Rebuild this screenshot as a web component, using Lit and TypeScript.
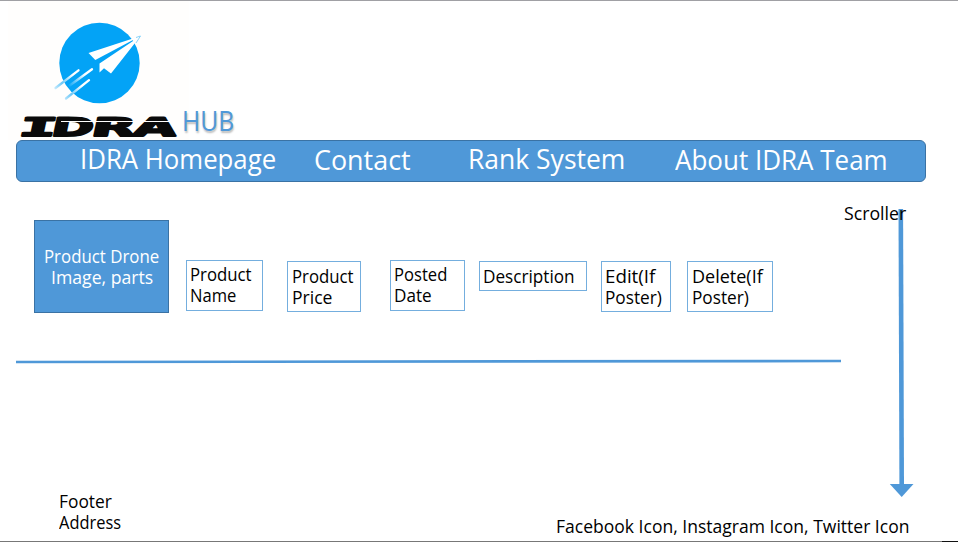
import { LitElement, html, css, svg } from "lit";
import { customElement, property } from "lit/decorators.js";
import { styleMap } from "lit/directives/style-map.js";

/** One line of text, condensed or widened to fill the given width. */
@customElement("fit-line")
class FitLine extends LitElement {
  @property({ type: Number }) width = 100;
  @property() text = "";
  static styles = css`
    :host { display: block; white-space: pre; }
    .box { display: block; }
    .ink { display: inline-block; transform-origin: 0 50%; vertical-align: top; }
  `;
  render() {
    return html`<span class="box" style=${styleMap({ width: this.width + "px" })}><span class="ink">${this.text}</span></span>`;
  }
  updated() {
    const ink = this.renderRoot.querySelector(".ink") as HTMLElement;
    ink.style.transform = `scaleX(${this.width / ink.offsetWidth})`;
  }
}

type Line = [string, number];
const line = ([text, width]: Line) => html`<fit-line .text=${text} .width=${width}></fit-line>`;

const fields: { name: string; lines: Line[] }[] = [
  { name: "name", lines: [["Product", 61.5], ["Name", 46]] },
  { name: "price", lines: [["Product", 61.5], ["Price", 40]] },
  { name: "posted", lines: [["Posted", 53.5], ["Date", 38]] },
  { name: "description", lines: [["Description", 91.5]] },
  { name: "edit", lines: [["Edit(If", 50], ["Poster)", 56.5]] },
  { name: "delete", lines: [["Delete(If", 71], ["Poster)", 56.5]] },
];

@customElement("app-root")
class AppRoot extends LitElement {
  static styles = css`
    :host {
      display: block; width: 958px; height: 542px; box-sizing: border-box; position: relative; overflow: hidden;
      background: #fff; color: #000; border-top: 1px solid #a0a0a4;
      font: 18px/21px "Open Sans", "Noto Sans", sans-serif;
    }
    .page { display: flex; flex-direction: column; height: 541px; }
    header { display: flex; height: 139px; flex: none; }
    .brand { width: 181px; margin-left: 8px; background: #fffefd; display: flex; flex-direction: column; }
    .mark { display: block; margin: 17px 0 0 42px; flex: none; }
    .word { display: block; margin: 0 0 0 10px; flex: none; overflow: visible; }
    .word text { font-family: "DejaVu Sans", sans-serif; font-weight: 700; font-size: 25.5px; stroke: #0a0a0a; stroke-width: 1.9; stroke-linejoin: round; fill: #0a0a0a; }
    .word .slab { font-family: "DejaVu Sans Mono", monospace; }
    .hub { margin: 103px 0 0 -7px; font-size: 28px; line-height: 32px; color: #4f98d8; text-shadow: 1px 2px 2px rgba(0,0,0,.28); }
    nav {
      flex: none; display: flex; width: 910px; height: 42px; margin-left: 16px; box-sizing: border-box;
      border: 1px solid #3a72a4; border-radius: 6px; background: #4f98d8; color: #fff; font-size: 28px; line-height: 32px;
    }
    .home { margin: 1px 0 0 63px; }
    .contact { margin: 2px 0 0 37.5px; }
    .rank { margin: 1px 0 0 57px; }
    .about { margin: 2px 0 0 50px; }
    .body { display: flex; flex: 1; }
    .content { width: 841px; flex: none; }
    .row { display: flex; align-items: flex-start; height: 140px; padding: 38px 0 0 34px; box-sizing: border-box; }
    .photo {
      width: 135px; height: 93px; box-sizing: border-box; border: 1px solid #3a72a4; background: #4f98d8; color: #fff;
      display: flex; flex-direction: column; align-items: center; padding-top: 25px; margin-right: 17px;
    }
    .field { box-sizing: border-box; border: 1px solid #74aede; height: 51px; margin-top: 41px; padding: 3px 0 0 3px; }
    .name { width: 77px; margin-top: 40px; margin-right: 24px; }
    .price { width: 74px; margin-right: 29px; padding: 4px 0 0 4px; }
    .posted { width: 75px; margin-top: 40px; margin-right: 14px; }
    .description { width: 108px; height: 30px; margin-right: 14px; }
    .edit { width: 70px; margin-right: 16px; }
    .delete { width: 86px; padding-left: 4px; }
    .description, .edit, .delete { padding-top: 4px; }
    .rule { display: block; margin-top: 35px; }
    .address { margin: 126px 0 0 58.5px; }
    .scroll { display: block; width: 117px; position: relative; }
    .arrow { display: block; margin: 26px 0 0 48px; }
    .label { position: absolute; left: 3px; top: 21px; }
    .social { position: absolute; left: 555.5px; top: 515px; }
    .edge { position: absolute; left: 0; right: 0; bottom: 0; height: 1px; background: linear-gradient(90deg, #777 942px, #111 942px); }
  `;

  render() {
    return html`
      <div class="page">
        <header>
          <div class="brand">${this.mark()}${this.word()}</div>
          <div class="hub">${line(["HUB", 52])}</div>
        </header>
        <nav>
          <div class="home">${line(["IDRA Homepage", 196])}</div>
          <div class="contact">${line(["Contact", 97])}</div>
          <div class="rank">${line(["Rank System", 157])}</div>
          <div class="about">${line(["About IDRA Team", 212.5])}</div>
        </nav>
        <div class="body">
          <main class="content">
            <div class="row">
              <div class="photo">${line(["Product Drone", 115])}${line(["Image, parts", 102])}</div>
              ${fields.map((f) => html`<div class="field ${f.name}">${f.lines.map(line)}</div>`)}
            </div>
            <svg class="rule" width="841" height="8"><path d="M16 5 841 4" stroke="#4f98d8" stroke-width="2.6" /></svg>
            <div class="address">${line(["Footer", 53])}${line(["Address", 62])}</div>
          </main>
          <aside class="scroll">
            <svg class="arrow" width="26" height="290">
              <path d="M11.8 1 12.7 276" stroke="#4f98d8" stroke-width="4.6" />
              <path d="M.8 276H24.5L12.7 289z" fill="#4f98d8" />
            </svg>
            <div class="label">${line(["Scroller", 62])}</div>
          </aside>
        </div>
      </div>
      <footer class="social">${line(["Facebook Icon, Instagram Icon, Twitter Icon", 353.5])}</footer>
      <div class="edge"></div>
    `;
  }

  mark() {
    return html`<svg class="mark" width="96" height="90" viewBox="50 18 96 90">
      <defs>
        <linearGradient id="a" gradientUnits="userSpaceOnUse" x1="55" y1="88.500" x2="79" y2="70"><stop offset="0" stop-color="#c4e9fc" /><stop offset=".3" stop-color="#6cc8f8" /><stop offset=".75" stop-color="#fff" /></linearGradient>
        <linearGradient id="b" gradientUnits="userSpaceOnUse" x1="68" y1="86" x2="92" y2="69"><stop offset="0" stop-color="#03a3f6" /><stop offset=".7" stop-color="#fff" /></linearGradient>
        <linearGradient id="c" gradientUnits="userSpaceOnUse" x1="65.500" y1="99" x2="89" y2="80"><stop offset="0" stop-color="#b0e1fb" /><stop offset=".25" stop-color="#6cc8f8" /><stop offset=".7" stop-color="#fff" /></linearGradient>
      </defs>
      <circle cx="99.5" cy="63" r="40.2" fill="#03a3f6" />
      <path d="M140.500 36 88.500 53 95.300 60z" fill="#fff" />
      <path d="M140.500 36 99.500 63.500V72.500L104 68.300 111 73.500z" fill="#fff" />
      <path d="M140.500 36 136 37.500" stroke="#6cc8f8" stroke-width=".8" />
      <path d="M140.500 36 136 43" stroke="#6cc8f8" stroke-width=".8" />
      <g fill="none" stroke-width="2.300" stroke-linecap="round">
        <path d="M55.500 88 78.500 70.300" stroke="url(#a)" />
        <path d="M69 86 92 69.200" stroke="url(#b)" />
        <path d="M66 98.500 89 80.200" stroke="url(#c)" />
      </g>
    </svg>`;
  }

  word() {
    const glyph = (c: string, x: number, w: number, cls = "") =>
      svg`<text class=${cls} transform="translate(${x} 28) skewX(-12)" textLength=${w} lengthAdjust="spacingAndGlyphs">${c}</text>`;
    return html`<svg class="word" width="164" height="31">
      ${glyph("I", 0, 37, "slab")}${glyph("D", 32, 42)}${glyph("R", 72, 44)}${glyph("A", 114, 43)}
      <path d="M43 13.500H159" stroke="#fffefd" stroke-width="1" />
    </svg>`;
  }
}
